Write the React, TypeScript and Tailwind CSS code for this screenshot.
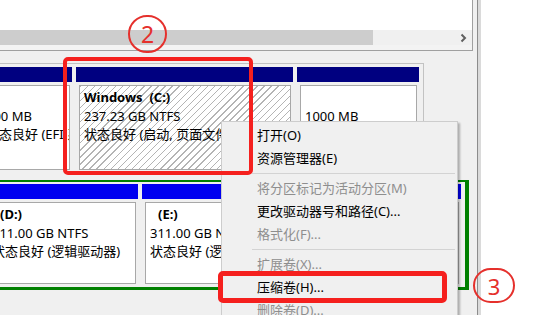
import type { ReactNode } from 'react'

const FONT = "font-['Noto_Sans','Noto_Sans_CJK_SC',sans-serif]"

const HATCH =
  'bg-[repeating-linear-gradient(135deg,#b4b4b4_0px,#b4b4b4_1px,#ffffff_1px,#ffffff_5px)]'

type MenuItem = { label: string; enabled: boolean } | 'sep'

const MENU: MenuItem[] = [
  { label: '打开(O)', enabled: true },
  { label: '资源管理器(E)', enabled: true },
  'sep',
  { label: '将分区标记为活动分区(M)', enabled: false },
  { label: '更改驱动器号和路径(C)...', enabled: true },
  { label: '格式化(F)...', enabled: false },
  'sep',
  { label: '扩展卷(X)...', enabled: false },
  { label: '压缩卷(H)...', enabled: true },
  { label: '删除卷(D)...', enabled: false },
]

interface PartitionProps {
  width: string
  bar: string
  boxHeight: string
  hatched?: boolean
  gap?: boolean
  children?: ReactNode
}

function Partition({ width, bar, boxHeight, hatched, gap, children }: PartitionProps) {
  return (
    <div className={`flex flex-col shrink-0 ${width} ${gap ? 'ml-[4px]' : ''}`}>
      <div className={`h-[15px] ${bar}`} />
      <div
        className={`mt-[3px] ml-[3px] mr-[2px] ${boxHeight} border border-[#a8a8a8] pl-[4px] pt-[2px] overflow-hidden whitespace-nowrap text-[13px] leading-[18.5px] text-black ${
          hatched ? HATCH : 'bg-white'
        }`}
      >
        {children}
      </div>
    </div>
  )
}

function ContextMenu() {
  return (
    <div className="absolute left-[221px] top-[121px] w-[237px] h-[210px] bg-[#f0f0f0] border border-[#cdcdcd] shadow-[2px_2px_2px_rgba(0,0,0,0.28)] pt-[2px]">
      {MENU.map((item, i) =>
        item === 'sep' ? (
          <div key={i} className="h-[7px] flex items-center">
            <div className="ml-[30px] mr-[2px] flex-1 h-px bg-[#d3d3d3]" />
          </div>
        ) : (
          <div
            key={i}
            className={`h-[23px] flex items-center pl-[35px] text-[13px] whitespace-nowrap ${
              item.enabled ? 'text-black' : 'text-[#8e8e8e]'
            }`}
          >
            {item.label}
          </div>
        ),
      )}
    </div>
  )
}

export default function App() {
  return (
    <div className={`relative w-[556px] h-[315px] overflow-hidden bg-white flex ${FONT}`}>
      <div className="w-[478px] h-full shrink-0 bg-[#f0f0f0] border-r border-[#8c8c8c] overflow-hidden flex flex-col">
        {/* top pane + horizontal scrollbar */}
        <div className="w-[473px] border-r border-b border-[#a0a0a0]">
          <div className="h-[30px] bg-white" />
          <div className="h-[20px] bg-[#f3f3f3] flex flex-col">
            <div className="h-[15px] flex items-center bg-[#f0f0f0]">
              <div className="w-[373px] h-full bg-[#cdcdcd]" />
              <div className="flex-1" />
              <svg width="8" height="10" viewBox="0 0 8 10" className="mr-[4px]">
                <polyline points="1.5,1.5 5,5 1.5,8.5" fill="none" stroke="#5f5f5f" strokeWidth="2" />
              </svg>
            </div>
          </div>
        </div>

        {/* disk 0 */}
        <div className="mt-[12px] -ml-[22px] w-[446px] shrink-0 flex border-t border-r border-[#c2c2c2] pt-[3px] pb-[2px]">
          <Partition width="w-[94px]" bar="bg-[#000080]" boxHeight="h-[85px]">
            <div>&nbsp;</div>
            <div>100 MB</div>
            <div>状态良好 (EFI 系统分区)</div>
          </Partition>
          <Partition width="w-[217px]" bar="bg-[#000080]" boxHeight="h-[85px]" hatched gap>
            <div className="font-bold">Windows&nbsp;&nbsp;(C:)</div>
            <div>237.23 GB NTFS</div>
            <div>状态良好 (启动, 页面文件, 故障转储, 主分区)</div>
          </Partition>
          <Partition width="w-[122px]" bar="bg-[#000080]" boxHeight="h-[85px]" gap>
            <div>&nbsp;</div>
            <div>1000 MB</div>
            <div>状态良好 (恢复分区)</div>
          </Partition>
        </div>

        {/* disk 1, extended partition */}
        <div className="mt-[8px] -ml-[19px] w-[488px] shrink-0 flex border-2 border-r-[4px] border-b-[3px] border-[#008000] pl-px pt-[2px] pb-[3px]">
          <Partition width="w-[154px]" bar="bg-[#0000f0]" boxHeight="h-[82px]">
            <div className="font-bold pl-[8px]">(D:)</div>
            <div>311.00 GB NTFS</div>
            <div>状态良好 (逻辑驱动器)</div>
          </Partition>
          <Partition width="w-[188px]" bar="bg-[#0000f0]" boxHeight="h-[82px]" gap>
            <div className="font-bold pl-[8px]">(E:)</div>
            <div>311.00 GB NTFS</div>
            <div>状态良好 (逻辑驱动器)</div>
          </Partition>
          <Partition width="w-[127px]" bar="bg-[#0000f0]" boxHeight="h-[82px]" gap>
            <div className="font-bold pl-[8px]">(F:)</div>
            <div>311.00 GB NTFS</div>
            <div>状态良好 (逻辑驱动器)</div>
          </Partition>
        </div>
      </div>
      <div className="w-[3px] h-full shrink-0 bg-[#dadada]" />
      <div className="flex-1 h-full bg-white" />

      <ContextMenu />

      {/* annotations */}
      <div className="absolute left-[63px] top-[57px] w-[190px] h-[118px] border-4 border-[#f5201e] rounded-[5px]" />
      <div className="absolute left-[218px] top-[271px] w-[229px] h-[32px] border-[5px] border-[#f5201e] rounded-[5px]" />
      <div className="absolute left-[128px] top-[15px] w-[39px] h-[38px] rounded-full border-2 border-[#e5302c] flex items-center justify-center text-[23px] leading-none text-[#e5302c]">
        2
      </div>
      <div className="absolute left-[473px] top-[268px] w-[42px] h-[35px] rounded-full border-2 border-[#e5302c] flex items-center justify-center text-[22px] leading-none text-[#e5302c]">
        3
      </div>
    </div>
  )
}
